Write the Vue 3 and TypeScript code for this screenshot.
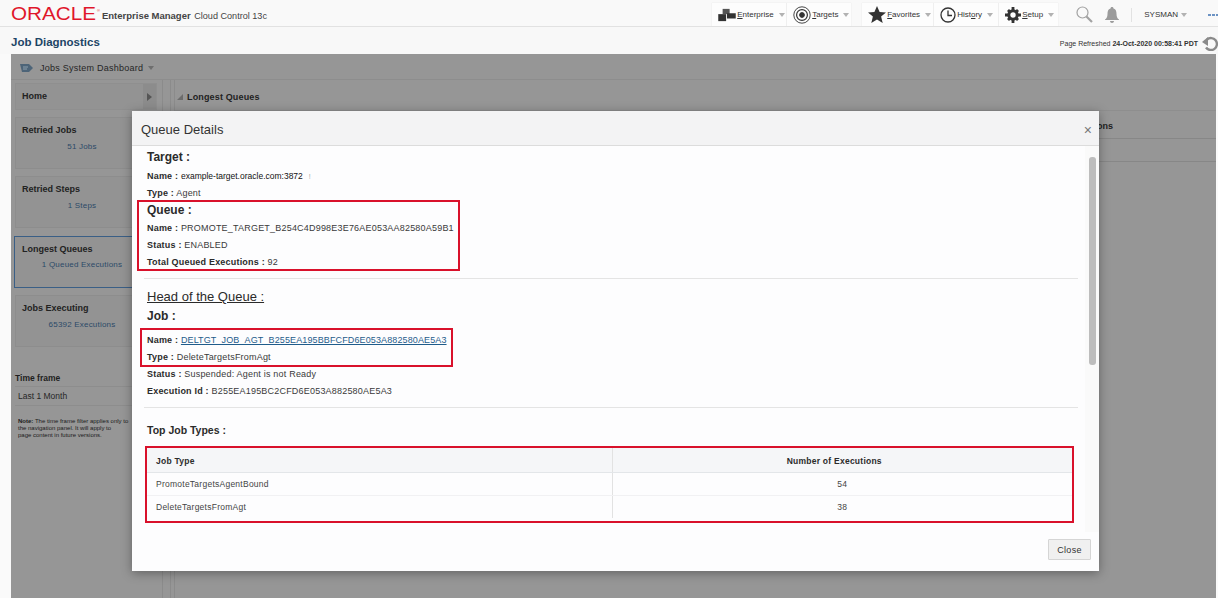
<script setup lang="ts">
const navCards = [
  { title: 'Retried Jobs', value: '51 Jobs', active: false },
  { title: 'Retried Steps', value: '1 Steps', active: false },
  { title: 'Longest Queues', value: '1 Queued Executions', active: true },
  { title: 'Jobs Executing', value: '65392 Executions', active: false },
]
const jobTypes = [
  { type: 'PromoteTargetsAgentBound', count: 54 },
  { type: 'DeleteTargetsFromAgt', count: 38 },
]
</script>

<template>
  <div class="page">
    <header class="topbar">
      <div class="brand">
        <span class="oracle">ORACLE</span><sup class="reg">®</sup>
        <span class="product"><b>Enterprise Manager</b> Cloud Control 13c</span>
      </div>
      <nav class="tools">
        <div class="group g1">
          <button class="tool w-ent">
            <svg width="18" height="14" viewBox="0 0 20 16"><path d="M0 7h9v8H0z" fill="#333"/><path d="M5 1h8v6H5z" fill="#555"/><path d="M10 6h10v6H10z" fill="#333"/></svg>
            <span><u>E</u>nterprise</span><i class="caret"></i>
          </button>
          <button class="tool w-tar">
            <svg width="18" height="18" viewBox="0 0 18 18" fill="none" stroke="#333"><circle cx="9" cy="9" r="8.200" stroke-width=".9"/><circle cx="9" cy="9" r="5.400" stroke-width="1.200"/><circle cx="9" cy="9" r="2.400" fill="#333"/></svg>
            <span><u>T</u>argets</span><i class="caret"></i>
          </button>
        </div>
        <div class="group g2">
          <button class="tool w-fav">
            <svg width="18" height="17" viewBox="0 0 18 17"><path d="M9 0l2.600 6 6.400.5-4.900 4.100 1.600 6.400L9 13.600 3.300 17l1.600-6.400L0 6.500 6.400 6z" fill="#333"/></svg>
            <span><u>F</u>avorites</span><i class="caret"></i>
          </button>
          <button class="tool w-his">
            <svg width="16" height="16" viewBox="0 0 16 16" fill="none" stroke="#333" stroke-width="1.300"><circle cx="8" cy="8" r="7"/><path d="M8 3.500V8.500H12"/></svg>
            <span>Hist<u>o</u>ry</span><i class="caret"></i>
          </button>
          <button class="tool w-set">
            <svg width="16" height="16" viewBox="0 0 16 16"><circle cx="8" cy="8" r="4.200" fill="none" stroke="#333" stroke-width="3"/><path d="M6.600 0h2.800v3H6.600zM6.600 13h2.800v3H6.600zM0 6.600h3v2.800H0zM13 6.600h3v2.800h-3zM2 4l2-2 2 2-2 2zM10 12l2-2 2 2-2 2zM12 2l2 2-2 2-2-2zM4 10l2 2-2 2-2-2z" fill="#333"/></svg>
            <span><u>S</u>etup</span><i class="caret"></i>
          </button>
        </div>
        <svg class="search" width="17" height="17" viewBox="0 0 17 17" fill="none" stroke="#a2a2a2"><circle cx="6.500" cy="6.500" r="5.500" stroke-width="1.200"/><path d="M10.500 10.500l5.500 5.500" stroke-width="2.200"/></svg>
        <svg class="bell" width="14" height="16" viewBox="0 0 14 16"><path d="M7 0c1 0 1.500.7 1.500 1.500C11 2.300 11.500 4.500 11.500 7c0 3 1 4.500 2.500 5.500V13H0v-.5C1.500 11.500 2.500 10 2.500 7c0-2.500.5-4.700 3-5.500C5.500.7 6 0 7 0zM5 14h4c0 1.200-1 2-2 2s-2-.8-2-2z" fill="#9b9b9b"/></svg>
        <span class="sep"></span>
        <span class="user">SYSMAN</span><i class="caret user-caret"></i>
        <span class="more"><i></i><i></i><i></i></span>
      </nav>
    </header>

    <div class="subbar">
      <h1>Job Diagnostics</h1>
      <div class="refreshed">
        <span>Page Refreshed <b>24-Oct-2020 00:58:41 PDT</b></span>
        <svg width="16" height="16" viewBox="0 0 16 16" fill="none"><path d="M5 4.500A6 6 0 1 1 4 12.500" stroke="#8a8a8a" stroke-width="2.400"/><path d="M0 7l6-5v9z" fill="#8a8a8a"/></svg>
      </div>
    </div>

    <section class="dash">
      <div class="dash-tools">
        <svg width="14" height="12" viewBox="0 0 14 12"><path d="M0 2h9l4 4-4 4H2z" fill="#4d6478"/><path d="M3 5h5M3 7h4" stroke="#8fa0ad"/></svg>
        <span class="dash-title">Jobs System Dashboard</span>
        <i class="caret dark"></i>
      </div>
      <div class="dash-body">
        <aside class="side">
          <div class="home">
            <span>Home</span>
            <span class="collapse"><i></i></span>
          </div>
          <div v-for="card in navCards" :key="card.title" class="card" :class="{ active: card.active }">
            <div class="card-title">{{ card.title }}</div>
            <div class="card-value">{{ card.value }}</div>
          </div>
          <div class="tf-label">Time frame</div>
          <div class="tf-value">Last 1 Month</div>
          <p class="note"><b>Note:</b> The time frame filter applies only to<br>the navigation panel. It will apply to<br>page content in future versions.</p>
        </aside>
        <div class="split"></div>
        <main class="main">
          <div class="main-head"><i class="tri"></i>Longest Queues</div>
          <div class="main-th"><span>ons</span></div>
          <div class="main-tr"></div>
        </main>
      </div>
    </section>

    <div class="modal">
      <div class="modal-head">
        <span>Queue Details</span>
        <span class="x">×</span>
      </div>
      <div class="modal-mid">
        <div class="content">
          <h3 class="h-target">Target :</h3>
          <p class="line l-first"><b>Name :</b> <span class="plain">example-target.oracle.com:3872</span><span class="mark">!</span></p>
          <p class="line"><b>Type :</b> Agent</p>
          <div class="red r1">
            <h3>Queue :</h3>
            <p class="line"><b>Name :</b> PROMOTE_TARGET_B254C4D998E3E76AE053AA82580A59B1</p>
            <p class="line"><b>Status :</b> ENABLED</p>
            <p class="line"><b>Total Queued Executions :</b> 92</p>
          </div>
          <hr class="rule r-a">
          <div class="head-q">Head of the Queue :</div>
          <h3 class="h-job">Job :</h3>
          <div class="red r2">
            <p class="line"><b>Name :</b> <a href="#">DELTGT_JOB_AGT_B255EA195BBFCFD6E053A882580AE5A3</a></p>
            <p class="line"><b>Type :</b> DeleteTargetsFromAgt</p>
          </div>
          <p class="line"><b>Status :</b> Suspended: Agent is not Ready</p>
          <p class="line"><b>Execution Id :</b> B255EA195BC2CFD6E053A882580AE5A3</p>
          <hr class="rule r-b">
          <div class="top-types">Top Job Types :</div>
          <div class="red r3">
            <table>
              <thead>
                <tr><th class="c1">Job Type</th><th class="c2">Number of Executions</th></tr>
              </thead>
              <tbody>
                <tr v-for="row in jobTypes" :key="row.type">
                  <td class="c1">{{ row.type }}</td><td class="c2">{{ row.count }}</td>
                </tr>
              </tbody>
            </table>
          </div>
        </div>
        <div class="track"><div class="thumb"></div></div>
      </div>
      <div class="modal-foot"><button class="close">Close</button></div>
    </div>
  </div>
</template>

<style>
html, body { margin: 0; padding: 0; overflow: hidden; background: #fafafa; }
</style>

<style scoped>
.page { position: relative; width: 1218px; height: 598px; overflow: hidden; background: #fafafa; font-family: "Liberation Sans", Arial, sans-serif; color: #2b2b2b; display: flex; flex-direction: column; }
b { font-weight: 700; }
.topbar { height: 27px; flex: none; display: flex; justify-content: space-between; align-items: center; background: #f9f9f9; border-bottom: 1px solid #e2e2e2; box-sizing: border-box; padding: 3px 0 0 11px; }
.brand { display: flex; align-items: center; white-space: nowrap; }
.oracle { display: inline-block; width: 86px; color: #e0162b; font-size: 17.500px; line-height: 17px; transform: scaleX(1.18); transform-origin: left center; }
.reg { color: #e0162b; font-size: 4px; margin: -8px 0 0 0; }
.product { font-size: 9.100px; margin-left: 2px; color: #444; padding-top: 2px; }
.product b { font-size: 9.500px; color: #444; margin-right: 1px; }
.tools { display: flex; align-items: center; }
.group { display: flex; height: 23px; gap: 1px; background: #efefef; box-shadow: 0 0 1px #ddd; }
.g1 { margin-right: 11px; }
.tool { height: 23px; padding: 0 0 0 6px; border: 0; background: #fdfdfd; display: flex; align-items: center; gap: 1px; font: 8px "Liberation Sans", Arial, sans-serif; color: #333; box-sizing: border-box; }
.w-ent { width: 74px; }
.w-tar { width: 64px; }
.w-fav { width: 71px; }
.w-his { width: 64px; }
.w-set { width: 59px; }
.caret { display: inline-block; margin-left: 4px; width: 0; height: 0; border-left: 3px solid transparent; border-right: 3px solid transparent; border-top: 4px solid #b2b2b2; }
.search { margin-left: 18px; }
.bell { margin-left: 12px; }
.sep { width: 1px; height: 14px; background: #e2e2e2; margin-left: 12px; }
.user { font-size: 8px; margin-left: 12px; color: #333; }
.user-caret { margin-left: 3px; }
.more { display: flex; gap: 1px; margin-left: 21px; width: 10px; overflow: hidden; }
.more i { width: 3px; height: 2px; flex: none; background: #6c93c4; }
.subbar { height: 27px; flex: none; display: flex; justify-content: space-between; align-items: center; padding: 3px 0 0 11px; box-sizing: border-box; background: #f8f8f8; }
h1 { margin: 0; font-size: 11.500px; font-weight: 700; color: #1d4566; }
.refreshed { display: flex; align-items: center; gap: 4px; font-size: 7px; color: #333; padding-top: 2px; }
.dash { flex: 1; margin-left: 11px; margin-right: 2px; background: #969696; display: flex; flex-direction: column; min-height: 0; }
.dash-tools { height: 26px; flex: none; display: flex; align-items: center; padding: 2px 0 0 9px; box-sizing: border-box; border-bottom: 1px solid #8d8d8d; font-size: 9px; color: #262626; }
.dash-title { margin-left: 6px; letter-spacing: .25px; }
.caret.dark { border-top-color: #6e6e6e; margin-left: 5px; }
.dash-body { flex: 1; display: flex; min-height: 0; }
.side { width: 152px; flex: none; padding: 3px 5px 0 4px; box-sizing: border-box; border-right: 1px solid #8b8b8b; }
.home { height: 27px; display: flex; justify-content: space-between; align-items: stretch; background: #939393; border: 1px solid #8f8f8f; box-sizing: border-box; font-size: 9px; font-weight: 700; padding-left: 6px; margin-bottom: 7px; color: #222; }
.home > span:first-child { padding-top: 7px; }
.collapse { width: 13px; background: #8c8c8c; display: flex; align-items: center; justify-content: center; }
.collapse i { width: 0; height: 0; border-top: 4px solid transparent; border-bottom: 4px solid transparent; border-left: 5px solid #555; }
.card { height: 52px; box-sizing: border-box; border: 1px solid #8d8d8d; background: #939393; margin-bottom: 7.400px; padding: 7px 0 0 6px; font-size: 9px; }
.card.active { border-color: #3a5f86; margin-left: -1px; padding-left: 7px; }
.card-title { font-weight: 700; color: #222; line-height: 11px; }
.card-value { text-align: center; font-size: 8px; color: #2c4a68; margin-top: 5.500px; line-height: 10px; width: 120px; letter-spacing: .2px; }
.tf-label { font-size: 8.500px; font-weight: 700; margin-top: 26px; color: #1e1e1e; line-height: 10px; }
.tf-value { font-size: 8.500px; padding: 4px 3px 0; margin-top: 3px; height: 20px; box-sizing: border-box; border-top: 1px solid #8d8d8d; border-bottom: 1px solid #8d8d8d; color: #262626; }
.note { margin: 12px 0 0 3px; font-size: 6px; line-height: 7px; color: #1c1c1c; white-space: nowrap; }
.split { width: 12px; flex: none; border-right: 1px solid #8b8b8b; box-sizing: border-box; background: linear-gradient(90deg, #969696 7px, #8b8b8b 7px, #8b8b8b 8px, #969696 8px); }
.main { flex: 1; padding-top: 3px; min-width: 0; }
.main-head { height: 27px; display: flex; align-items: center; font-size: 9px; font-weight: 700; border-bottom: 1px solid #8e8e8e; padding-left: 2px; color: #222; letter-spacing: .15px; }
.tri { width: 0; height: 0; border-left: 6px solid transparent; border-bottom: 6px solid #6c6c6c; margin-right: 4px; }
.main-th { height: 27px; line-height: 31px; text-align: right; padding-right: 103px; font-size: 9px; font-weight: 700; border-bottom: 1px solid #878787; color: #222; }
.main-tr { height: 22px; border-bottom: 1px solid #878787; }
.modal { position: absolute; left: 132px; top: 111px; width: 967px; height: 460px; background: #fdfdfe; box-shadow: 0 2px 10px rgba(0,0,0,.35); display: flex; flex-direction: column; }
.modal-head { height: 35px; flex: none; box-sizing: border-box; background: #f3f3f4; border-bottom: 1px solid #dcdcdc; display: flex; justify-content: space-between; align-items: center; padding: 2px 7px 0 9px; font-size: 13px; color: #333; }
.x { font-size: 14px; color: #777; padding-top: 1px; }
.modal-mid { height: 386px; flex: none; display: flex; overflow: hidden; }
.content { flex: 1; min-width: 0; padding: 5px 7px 0 15px; }
h3 { margin: 0; font-size: 12px; line-height: 13px; font-weight: 700; color: #2b2b2b; }
.line { margin: 0; font-size: 9px; line-height: 11px; color: #3a3a3a; margin-top: 6px; letter-spacing: .2px; white-space: nowrap; }
.line b { color: #2b2b2b; }
.l-first { margin-top: 7px; }
.plain { font-size: 8.500px; color: #111; letter-spacing: 0; }
.mark { margin-left: 6px; font-size: 7px; color: #aaa; }
.red { border: 2px solid #d9112b; box-sizing: border-box; }
.r1 { margin: 1px 0 0 -10px; width: 323px; height: 71px; padding: 2px 0 0 8px; }
.r1 .line:first-of-type { margin-top: 6px; }
.rule { border: 0; height: 1px; background: #e4e4e4; margin: 0; }
.r-a { margin: 7px 0 0 -3px; }
.head-q { font-size: 13px; text-decoration: underline; margin-top: 10px; line-height: 15px; color: #2b2b2b; }
.h-job { margin-top: 6px; }
.r2 { margin: 5px 0 -4px -7px; width: 313px; height: 39px; padding: 0 0 0 5px; }
.r2 .line:first-child { margin-top: 5px; }
a { color: #1f5c8b; letter-spacing: .12px; }
.r-b { margin: 10px 0 0 -3px; }
.top-types { font-size: 10.500px; font-weight: 700; margin-top: 16px; line-height: 12px; }
.r3 { margin: 10px 0 0 -2px; width: 929px; height: 77px; }
table { width: 100%; border-collapse: collapse; table-layout: fixed; }
th, td { font-size: 8.500px; height: 23px; padding: 0; letter-spacing: .25px; box-sizing: border-box; }
th { height: 24px; padding-top: 2px; background: #f5f6f8; border-bottom: 1px solid #e3e6e9; color: #2b2b2b; }
td { color: #444; border-bottom: 1px solid #f1f1f3; }
tr:last-child td { border-bottom: 0; }
.c1 { width: 465px; text-align: left; padding-left: 9px; border-right: 1px solid #e2e2e2; }
.c2 { text-align: center; }
th.c2 { padding-right: 16px; }
.track { width: 14px; flex: none; background: #fafafa; box-sizing: border-box; padding: 11px 3px 0 4px; }
.thumb { height: 208px; background: #bdbdbd; border-radius: 3px; }
.modal-foot { flex: 1; display: flex; justify-content: flex-end; align-items: center; padding-right: 8px; }
.close { width: 43px; height: 21px; margin-bottom: 4px; padding: 0; background: #f0f0f0; border: 1px solid #d5d5d5; border-radius: 1px; font: 9px "Liberation Sans", Arial, sans-serif; color: #333; letter-spacing: .3px; }
</style>
